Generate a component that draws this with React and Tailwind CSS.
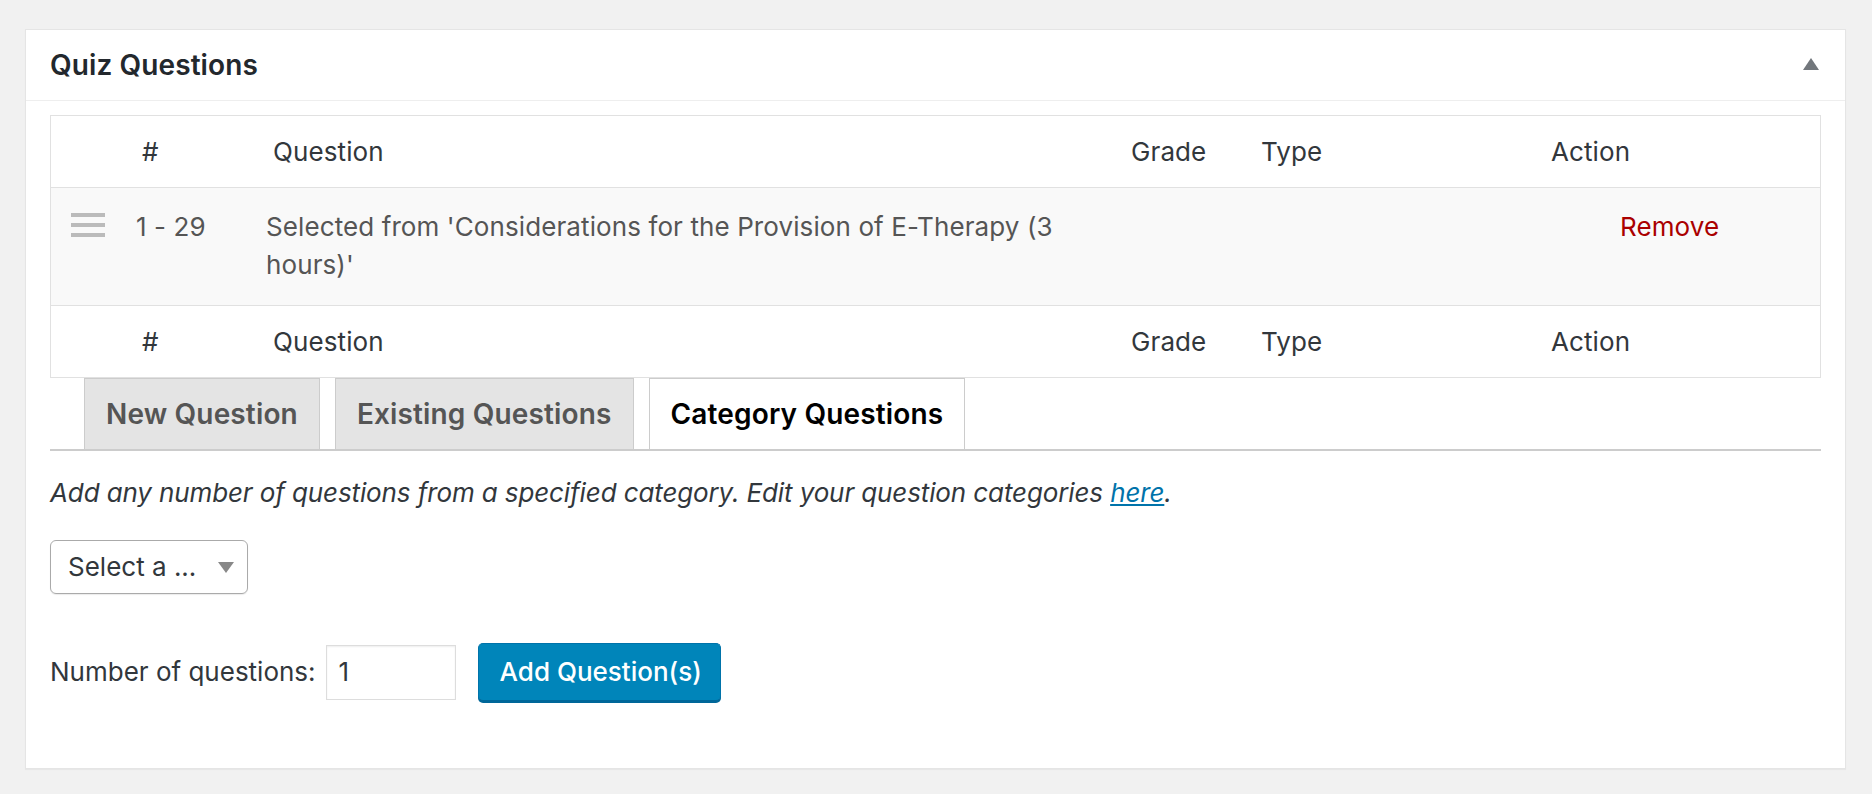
export default function App() {
  return (
    <div className="min-h-screen bg-[#f1f1f1] pt-[29px] pl-[25px] pr-[26px] font-['Inter',sans-serif] text-[26px] leading-[38px] text-[#32373c]">
      <div className="border border-[#e5e5e5] bg-white shadow-[0_1px_1px_rgba(0,0,0,0.04)]">
        {/* header */}
        <div className="flex h-[71px] items-center justify-between border-b border-[#eeeeee] pl-6 pr-[26px]">
          <h2 className="text-[28px] font-semibold tracking-[0.1px] text-[#23282d]">Quiz Questions</h2>
          <svg width="16" height="12" viewBox="0 0 16 12" className="mb-[3px]">
            <polygon points="8,0 16,12 0,12" fill="#72777c" />
          </svg>
        </div>

        <div className="px-6 pt-[14px] pb-[67px]">
          {/* table */}
          <div className="border border-[#e1e1e1] tracking-[0.1px]">
            <div className="flex h-[72px] items-center border-b border-[#e1e1e1]">
              <div className="w-[222px] pl-[91px]">#</div>
              <div className="w-[858px]">Question</div>
              <div className="w-[130px]">Grade</div>
              <div className="w-[290px]">Type</div>
              <div>Action</div>
            </div>
            <div className="flex h-[118px] border-b border-[#e1e1e1] bg-[#f9f9f9] pt-[20px] text-[#555]">
              <div className="w-[85px] pl-[20px] pt-[5px]">
                <div className="flex w-[34px] flex-col gap-[6px]">
                  <span className="h-[4px] bg-[#bbbbbb]" />
                  <span className="h-[4px] bg-[#bbbbbb]" />
                  <span className="h-[4px] bg-[#bbbbbb]" />
                </div>
              </div>
              <div className="w-[130px]">1 - 29</div>
              <div className="w-[1354px]">
                Selected from 'Considerations for the Provision of E-Therapy (3
                <br />
                hours)'
              </div>
              <div className="text-[#aa0000]">Remove</div>
            </div>
            <div className="flex h-[71px] items-center">
              <div className="w-[222px] pl-[91px]">#</div>
              <div className="w-[858px]">Question</div>
              <div className="w-[130px]">Grade</div>
              <div className="w-[290px]">Type</div>
              <div>Action</div>
            </div>
          </div>

          {/* tabs */}
          <div className="flex gap-[15px] border-b-2 border-[#cccccc] pl-[34px] text-[28px] tracking-[0.15px]">
            <div className="border border-b-0 border-[#cccccc] bg-[#e4e4e4] px-[21px] py-[16px] font-semibold text-[#555]">
              New Question
            </div>
            <div className="border border-b-0 border-[#cccccc] bg-[#e4e4e4] px-[21px] py-[16px] font-semibold text-[#555]">
              Existing Questions
            </div>
            <div className="border border-b-0 border-[#cccccc] bg-white px-[21px] py-[16px] font-semibold text-black">
              Category Questions
            </div>
          </div>

          <p className="mt-[23px] italic tracking-[-0.12px] text-[#32373c]">
            Add any number of questions from a specified category. Edit your question categories{" "}
            <a href="#" className="text-[#0073aa] underline">
              here
            </a>
            .
          </p>

          <div className="mt-[28px] flex h-[54px] w-[198px] items-center justify-between rounded-[6px] border border-[#aaaaaa] pl-[17px] pr-[13px] shadow-[0_1px_1px_rgba(0,0,0,0.08)]">
            <span>Select a ...</span>
            <svg width="16" height="11" viewBox="0 0 16 11">
              <polygon points="0,0 16,0 8,11" fill="#888888" />
            </svg>
          </div>

          <div className="mt-[49px] flex items-center">
            <span>Number of questions:</span>
            <div className="ml-[10px] flex h-[55px] w-[130px] items-center border border-[#dddddd] pl-[12px] shadow-[inset_0_1px_2px_rgba(0,0,0,0.07)]">
              1
            </div>
            <button className="ml-[22px] h-[58px] w-[243px] rounded-[5px] border border-[#0073aa] border-b-[#006799] bg-[#0085ba] text-left pl-[21px] font-medium text-white shadow-[0_2px_0_#006799]">
              Add Question(s)
            </button>
          </div>
        </div>
      </div>
    </div>
  );
}
